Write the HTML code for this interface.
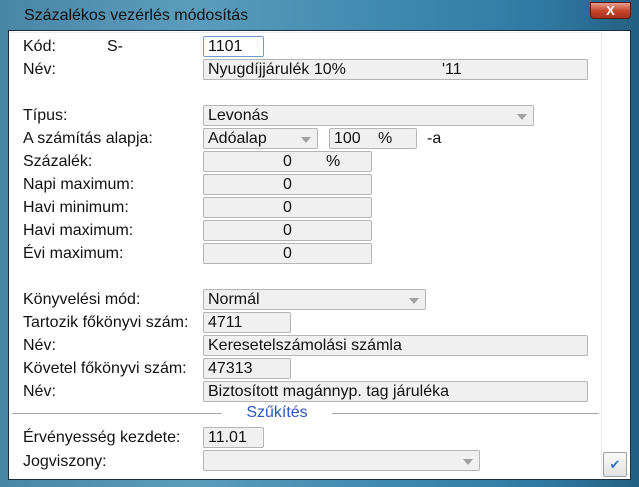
<!DOCTYPE html>
<html><head><meta charset="utf-8"><style>
*{box-sizing:border-box;margin:0;padding:0}
body{width:639px;height:487px;overflow:hidden;background:linear-gradient(90deg,#4a86a6,#5b9cbc 30%,#3f8ab0 60%,#2f7aa2 85%,#245f82);font-family:"Liberation Sans",Arial,sans-serif;position:relative}
.title{position:absolute;left:24px;top:7px;font-size:16px;color:#111}
.close{position:absolute;left:590px;top:2px;width:41px;height:17px;border:1px solid #5a1a10;border-radius:0 0 4px 4px;background:linear-gradient(#e8a08c,#c7482f 50%,#a8301c);color:#fff;font-weight:bold;font-size:13px;text-align:center;line-height:15px}
.client{position:absolute;left:8px;top:30px;width:623px;height:450px;background:#fff;border:1px solid #1a2e3f}
.panel{position:absolute;left:10px;top:32px;width:592px;height:446px;background:#fff;border-right:1px solid #ececec;border-top:1px solid #ececec}
.l{position:absolute;left:23px;font-size:16px;color:#111;margin-top:1px}
.f{position:absolute;height:21px;background:#f0f0f0;border:1px solid #b5b5b5;border-radius:2px;font-size:16px;line-height:20px;padding-left:4px;color:#111}
.c{text-align:center;padding-left:0}
.arr{position:absolute;right:6px;top:8px;width:0;height:0;border-left:5px solid transparent;border-right:5px solid transparent;border-top:6px solid #a0a0a0}
</style></head><body>
<div class="title">Százalékos vezérlés módosítás</div>
<div class="close">X</div>
<div class="client"></div>
<div class="panel"></div>
<div class="l" style="top:37px">Kód:</div><div class="l" style="top:37px;left:107px">S-</div>
<div class="f" style="left:203px;top:36px;width:61px;background:#fff;border-color:#6f9bc8">1101</div>
<div class="l" style="top:60px">Név:</div>
<div class="f" style="left:203px;top:59px;width:385px">Nyugdíjjárulék 10%<span style="position:absolute;left:238px">'11</span></div>
<div class="l" style="top:106px">Típus:</div>
<div class="f" style="left:203px;top:105px;width:331px">Levonás<div class="arr"></div></div>
<div class="l" style="top:129px">A számítás alapja:</div>
<div class="f" style="left:203px;top:128px;width:115px">Adóalap<div class="arr"></div></div>
<div class="f" style="left:329px;top:128px;width:88px">100<span style="position:absolute;left:48px">%</span></div>
<div class="l" style="top:129px;left:427px">-a</div>
<div class="l" style="top:152px">Százalék:</div>
<div class="f c" style="left:203px;top:151px;width:169px">0<span style="position:absolute;left:122px">%</span></div>
<div class="l" style="top:175px">Napi maximum:</div>
<div class="f c" style="left:203px;top:174px;width:169px">0</div>
<div class="l" style="top:198px">Havi minimum:</div>
<div class="f c" style="left:203px;top:197px;width:169px">0</div>
<div class="l" style="top:221px">Havi maximum:</div>
<div class="f c" style="left:203px;top:220px;width:169px">0</div>
<div class="l" style="top:244px">Évi maximum:</div>
<div class="f c" style="left:203px;top:243px;width:169px">0</div>
<div class="l" style="top:290px">Könyvelési mód:</div>
<div class="f" style="left:203px;top:289px;width:223px">Normál<div class="arr"></div></div>
<div class="l" style="top:313px">Tartozik főkönyvi szám:</div>
<div class="f" style="left:203px;top:312px;width:88px">4711</div>
<div class="l" style="top:336px">Név:</div>
<div class="f" style="left:203px;top:335px;width:385px">Keresetelszámolási számla</div>
<div class="l" style="top:359px">Követel főkönyvi szám:</div>
<div class="f" style="left:203px;top:358px;width:88px">47313</div>
<div class="l" style="top:382px">Név:</div>
<div class="f" style="left:203px;top:381px;width:385px">Biztosított magánnyp. tag járuléka</div>
<div style="position:absolute;left:12px;top:413px;width:587px;height:1px;background:#a8a8a8"></div>
<div style="position:absolute;left:222px;top:404px;width:110px;background:#fff;text-align:center;color:#2a55c8;font-size:16px;line-height:18px">Szűkítés</div>
<div class="l" style="top:428px">Érvényesség kezdete:</div>
<div class="f" style="left:203px;top:427px;width:61px">11.01</div>
<div class="l" style="top:452px">Jogviszony:</div>
<div class="f" style="left:203px;top:450px;width:277px"><div class="arr"></div></div>
<div style="position:absolute;left:603px;top:452px;width:24px;height:25px;border:1px solid #a0a0a0;border-radius:2px;background:linear-gradient(#fafafa,#e2e2e2);color:#3a6fc8;font-size:13px;text-align:center;line-height:24px">✔</div>
</body></html>
